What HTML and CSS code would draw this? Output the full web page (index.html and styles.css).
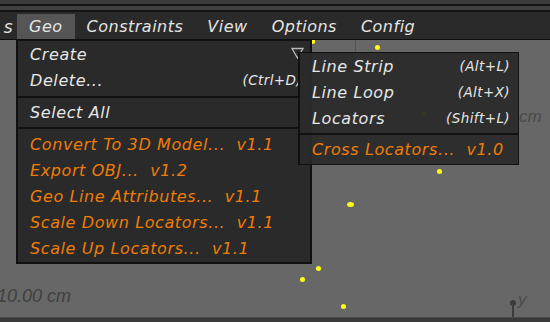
FILE: index.html
```html
<!DOCTYPE html>
<html>
<head>
<meta charset="utf-8">
<link rel="stylesheet" href="styles.css">
</head>
<body>
<div class="app">
  <div class="topbars"></div>
  <div class="menubar">
    <span class="mb-item mb-first">s</span>
    <span class="mb-item mb-active">Geo</span>
    <span class="mb-item">Constraints</span>
    <span class="mb-item">View</span>
    <span class="mb-item">Options</span>
    <span class="mb-item">Config</span>
  </div>
  <div class="viewport">
    <div class="vline"></div>
    <span class="dot" style="left:310px;top:-1px"></span>
    <span class="dot" style="left:375px;top:5px"></span>
    <span class="dot dim" style="left:421px;top:71px"></span>
    <span class="dot dim" style="left:451px;top:77px"></span>
    <span class="dash"></span>
    <span class="zlabel">z</span>
    <span class="dot" style="left:437px;top:129px"></span>
    <span class="dot wide" style="left:347px;top:162px"></span>
    <span class="dot" style="left:316px;top:226px"></span>
    <span class="dot" style="left:300px;top:237px"></span>
    <span class="dot" style="left:341px;top:264px"></span>
    <span class="cm-label">cm</span>
    <span class="scale-label">10.00 cm</span>
    <span class="yaxis"></span>
    <span class="ylabel">y</span>

    <div class="menu">
      <div class="row">
        <span>Create</span>
        <svg class="tri" width="13" height="12" viewBox="0 0 13 12"><path d="M1 1.5 L12 1.5 L6.5 11 Z" fill="none" stroke="#b8b8b8" stroke-width="1.3"/></svg>
      </div>
      <div class="row"><span>Delete...</span><span class="key">(Ctrl+D)</span></div>
      <div class="sep sep1"></div>
      <div class="row"><span>Select All</span></div>
      <div class="sep sep2"></div>
      <div class="row orange"><span>Convert To 3D Model...&nbsp; v1.1</span></div>
      <div class="row orange"><span>Export OBJ...&nbsp; v1.2</span></div>
      <div class="row orange"><span>Geo Line Attributes...&nbsp; v1.1</span></div>
      <div class="row orange"><span>Scale Down Locators...&nbsp; v1.1</span></div>
      <div class="row orange"><span>Scale Up Locators...&nbsp; v1.1</span></div>
    </div>

    <div class="submenu">
      <div class="row"><span>Line Strip</span><span class="key">(Alt+L)</span></div>
      <div class="row"><span>Line Loop</span><span class="key">(Alt+X)</span></div>
      <div class="row"><span>Locators</span><span class="key">(Shift+L)</span></div>
      <div class="sep sep3"></div>
      <div class="row orange"><span>Cross Locators...&nbsp; v1.0</span></div>
    </div>
  </div>
  <div class="bottombar"></div>
</div>
</body>
</html>
```
FILE: styles.css
```css
* { box-sizing: border-box; }
html, body { margin: 0; padding: 0; }
body {
  width: 550px;
  height: 322px;
  overflow: hidden;
  background: #676767;
  font-family: "DejaVu Sans", "Liberation Sans", sans-serif;
}
.app {
  width: 550px;
  height: 322px;
  display: flex;
  flex-direction: column;
}
.topbars {
  height: 13px;
  background: linear-gradient(to bottom,
    #3c3c3c 0, #3c3c3c 4px,
    #141414 4px, #141414 6px,
    #404040 6px, #404040 10px,
    #141414 10px, #141414 12px,
    #2a2a2a 12px);
}
.menubar {
  height: 27px;
  background: #2a2a2a;
  border-bottom: 1px solid #0e0e0e;
  display: flex;
  align-items: stretch;
  color: #e4e4e4;
  font-style: italic;
  font-size: 16px;
  letter-spacing: 0.5px;
  white-space: nowrap;
}
.mb-item {
  display: flex;
  align-items: center;
  padding: 0 12px;
  margin-top: 1px;
}
.mb-first { padding: 0 4px 0 0; width: 17px; justify-content: flex-end; font-size: 17px; }
.mb-active { background: #555555; }
.viewport {
  position: relative;
  flex: 1;
  background: #676767;
  overflow: hidden;
}
.bottombar {
  height: 5px;
  background: #3a3a3a;
  border-top: 1px solid #4a4a4a;
}
.vline {
  position: absolute;
  left: 355px;
  top: 0;
  width: 1px;
  height: 12px;
  background: rgba(0,0,0,0.18);
}
.dot {
  position: absolute;
  width: 5px;
  height: 5px;
  border-radius: 50%;
  background: #ffff10;
}
.dot.wide { width: 7px; height: 5px; }
.dot.dim { background: #e8e800; }
.dash {
  position: absolute;
  left: 415px;
  top: 17px;
  width: 22px;
  border-top: 1px dashed #4a4a4a;
}
.zlabel {
  position: absolute;
  left: 438px;
  top: 9px;
  font-size: 13px;
  font-style: italic;
  color: #4a4a4a;
  font-family: "Liberation Sans", sans-serif;
}
.cm-label {
  position: absolute;
  left: 519px;
  top: 67px;
  font-size: 17px;
  color: #4a4a4a;
  font-family: "Liberation Sans", sans-serif;
  font-style: italic;
}
.scale-label {
  position: absolute;
  left: -3px;
  top: 246px;
  font-size: 18px;
  color: #404040;
  font-family: "Liberation Sans", sans-serif;
  font-style: italic;
}
.yaxis {
  position: absolute;
  left: 512px;
  top: 262px;
  width: 2px;
  height: 20px;
  background: #3c3c3c;
}
.yaxis::before {
  content: "";
  position: absolute;
  left: -2px;
  top: -2px;
  width: 6px;
  height: 6px;
  border-radius: 50%;
  background: #3c3c3c;
}
.ylabel {
  position: absolute;
  left: 518px;
  top: 250px;
  font-size: 17px;
  font-style: italic;
  color: #4a4a4a;
  font-family: "Liberation Sans", sans-serif;
}

.menu, .submenu {
  position: absolute;
  background: #2a2a2a;
  color: #e6e6e6;
  font-style: italic;
  font-size: 16px;
  letter-spacing: 0.6px;
  white-space: nowrap;
  display: flex;
  flex-direction: column;
}
.menu {
  left: 16px;
  top: 0;
  width: 296px;
  height: 224px;
  border: 2px solid #111;
  border-top: 1px solid #111;
  padding: 0 0 2px 0;
}
.submenu {
  left: 298px;
  top: 12px;
  width: 221px;
  height: 113px;
  border: 1px solid #111;
  border-left-width: 2px;
  background: rgba(42,42,42,0.94);
}
.row {
  height: 26px;
  display: flex;
  align-items: center;
  justify-content: space-between;
  padding: 0 8px 0 12px;
  flex: none;
}
.row.orange { color: #ee7d08; }
.key {
  font-size: 13.5px;
  letter-spacing: 0.4px;
}
.tri { margin-right: -2px; margin-top: -2px; }
.sep {
  flex: none;
  height: 2px;
  background: #111;
}
.sep1 { margin: 3px 0 1px; }
.sep2 { margin: 2px 0 2px; }
.sep3 { margin: 2px 0 1px; height: 2px; }
```
